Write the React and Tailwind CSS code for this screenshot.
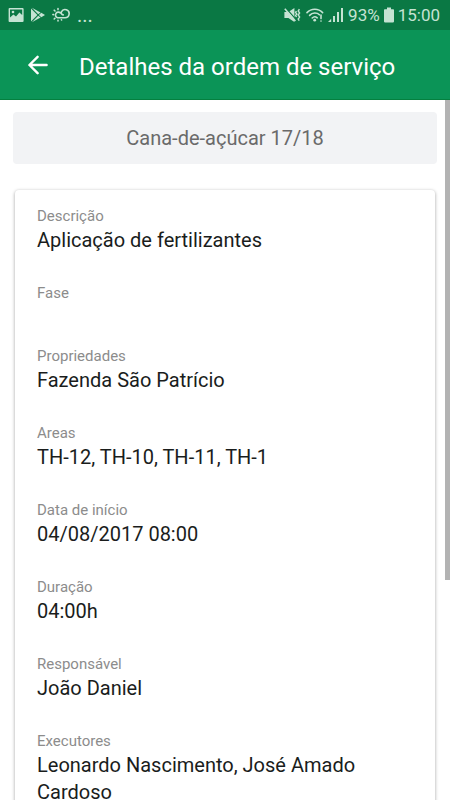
import React from 'react';

const campos = [
    { rotulo: 'Descrição', valor: 'Aplicação de fertilizantes' },
    { rotulo: 'Fase', valor: '' },
    { rotulo: 'Propriedades', valor: 'Fazenda São Patrício' },
    { rotulo: 'Areas', valor: 'TH-12, TH-10, TH-11, TH-1' },
    { rotulo: 'Data de início', valor: '04/08/2017 08:00' },
    { rotulo: 'Duração', valor: '04:00h' },
    { rotulo: 'Responsável', valor: 'João Daniel' },
    { rotulo: 'Executores', valor: 'Leonardo Nascimento, José Amado Cardoso' },
];

function IconeImagem() {
    return (
        <svg viewBox="0 0 16 16" className="size-4" fill="currentColor">
            <path fillRule="evenodd" d="M1.5 1H14.5Q15.6 1 15.6 2V14Q15.6 15 14.5 15H1.5Q0.6 15 0.6 14V2Q0.6 1 1.5 1ZM2 2.6V10.4L5.4 7.6L8 9.6L11.4 5.6L14.2 8V2.6Z" />
            <circle cx="5" cy="5" r="1.3" />
        </svg>
    );
}

function IconePlay() {
    return (
        <svg viewBox="0 0 14 16" className="h-4 w-[14px]" fill="currentColor">
            <path d="M0 1.4V14.6L6.4 8Z" />
            <path d="M0.9 0.8L7.2 7.2L9.6 5.5Z" />
            <path d="M0.9 15.2L7.2 8.8L9.6 10.5Z" />
            <path d="M7.9 8L10.3 5.8L14 8L10.3 10.2Z" />
        </svg>
    );
}

function IconeClima() {
    return (
        <svg viewBox="0 0 18 16" className="h-4 w-[18px]" fill="none" stroke="currentColor" strokeWidth="1.6" strokeLinecap="round">
            <path d="M8.4 5.9A2.9 2.9 0 1 0 5.6 10.8H13A4.1 4.1 0 1 0 9.4 4.8C8.9 6.6 9.6 7.7 11.2 7.9" />
            <path d="M6 1.6V2.6M2.2 3.2L3 4M0.9 7.6H1.6M2.2 12L2.9 11.3M6 14V13.4M9.6 13L9.4 12.8" />
        </svg>
    );
}

function IconeMudo() {
    return (
        <svg viewBox="0 0 17 16" className="h-4 w-[17px]" fill="none" stroke="currentColor">
            <path d="M0.4 5H4.4L10.4 1V15L4.4 11H0.4Z" fill="currentColor" stroke="none" />
            <path d="M2 1.2L12 12.6" stroke="#0a7844" strokeWidth="1.3" />
            <path d="M0.8 1.8L11.4 14" strokeWidth="1.6" />
            <path d="M12.4 4L11.6 5.4L12.8 7L11.6 8.6L12.6 10M15.4 2.2L14.2 4L15.6 6L14.2 8L15.6 10L14.2 12L15.2 13.6" strokeWidth="1.4" />
        </svg>
    );
}

function IconeWifi() {
    return (
        <svg viewBox="0 0 18 16" className="h-4 w-[18px]" fill="none" stroke="currentColor" strokeWidth="1.6" strokeLinecap="round">
            <path d="M1 5.6C5.2 1.2 12.4 1.2 16.6 5.6" />
            <path d="M3.6 8.4C6.4 5.4 11 5.4 13.4 7.8" />
            <path d="M6.2 11C7.6 9.6 9.8 9.6 11.2 10.8" />
            <circle cx="8.7" cy="13.2" r="1.4" fill="currentColor" stroke="none" />
            <path d="M15 8V11.6M15 14V14.1" />
        </svg>
    );
}

function IconeSinal() {
    return (
        <svg viewBox="0 0 16 16" className="size-4" fill="currentColor">
            <path d="M0 15L3.2 11.8V15Z" />
            <rect x="5" y="9" width="2" height="6" />
            <rect x="9" y="5" width="2" height="10" />
            <rect x="13" y="1" width="2" height="14" />
        </svg>
    );
}

function IconeBateria() {
    return (
        <svg viewBox="0 0 10 16" className="h-4 w-[10px]" fill="currentColor">
            <path d="M3 0.6H7V2.2H9.2Q10 2.2 10 3V14.6Q10 15.4 9.2 15.4H0.8Q0 15.4 0 14.6V3Q0 2.2 0.8 2.2H3Z" />
        </svg>
    );
}

function BarraDeStatus() {
    return (
        <div className="flex h-[30px] shrink-0 items-center justify-between bg-[#0a7844] pr-[10px] pl-2 text-[#c5e3d3]">
            <div className="flex items-center gap-[7px]">
                <IconeImagem />
                <IconePlay />
                <IconeClima />
                <span className="text-xl leading-4">...</span>
            </div>
            <div className="flex items-center gap-1">
                <div className="flex items-center gap-[5px]">
                    <IconeMudo />
                    <IconeWifi />
                </div>
                <IconeSinal />
                <span className="text-[17px] leading-5">93%</span>
                <IconeBateria />
                <span className="text-[17px] leading-5">15:00</span>
            </div>
        </div>
    );
}

export default function App() {
    return (
        <div className="flex h-screen flex-col overflow-hidden bg-white font-['Roboto','Noto_Sans',sans-serif]">
            <BarraDeStatus />

            <header className="flex h-[70px] shrink-0 items-center border-b border-[#04803f] bg-[#0b9457] pl-6 text-white">
                <button type="button" aria-label="Voltar" className="mr-[27px] flex size-7 items-center justify-center">
                    <svg viewBox="0 0 20 20" className="size-5" fill="none" stroke="currentColor" strokeWidth="2.4" strokeLinecap="round" strokeLinejoin="round">
                        <path d="M18.6 10H1.6M9.6 1.8L1.4 10L9.6 18.2" />
                    </svg>
                </button>
                <h1 className="pt-1 text-2xl leading-8 whitespace-nowrap">Detalhes da ordem de serviço</h1>
            </header>

            <main className="relative flex-1 overflow-hidden px-[13px] pt-3">
                <div className="rounded bg-[#f2f3f5] py-3 text-center text-xl leading-7 text-[#6a6a6a]">
                    Cana-de-açúcar 17/18
                </div>

                <dl className="mx-[2px] mt-[26px] flex flex-col gap-[29px] rounded-sm bg-white px-[22px] py-4 shadow-[0_1px_3px_1px_rgba(0,0,0,0.22)]">
                    {campos.map(c => (
                        <div key={c.rotulo}>
                            <dt className="text-[15px] leading-[21px] text-[#8c8c8c]">{c.rotulo}</dt>
                            <dd className="min-h-[13px] text-xl leading-[27px] text-[#1a1d1c]">{c.valor}</dd>
                        </div>
                    ))}
                </dl>

                {/* Indicador de rolagem */}
                <div className="absolute top-0 right-0 h-[68.6%] w-[5px] bg-[#b3b3b3]" />
            </main>
        </div>
    );
}
